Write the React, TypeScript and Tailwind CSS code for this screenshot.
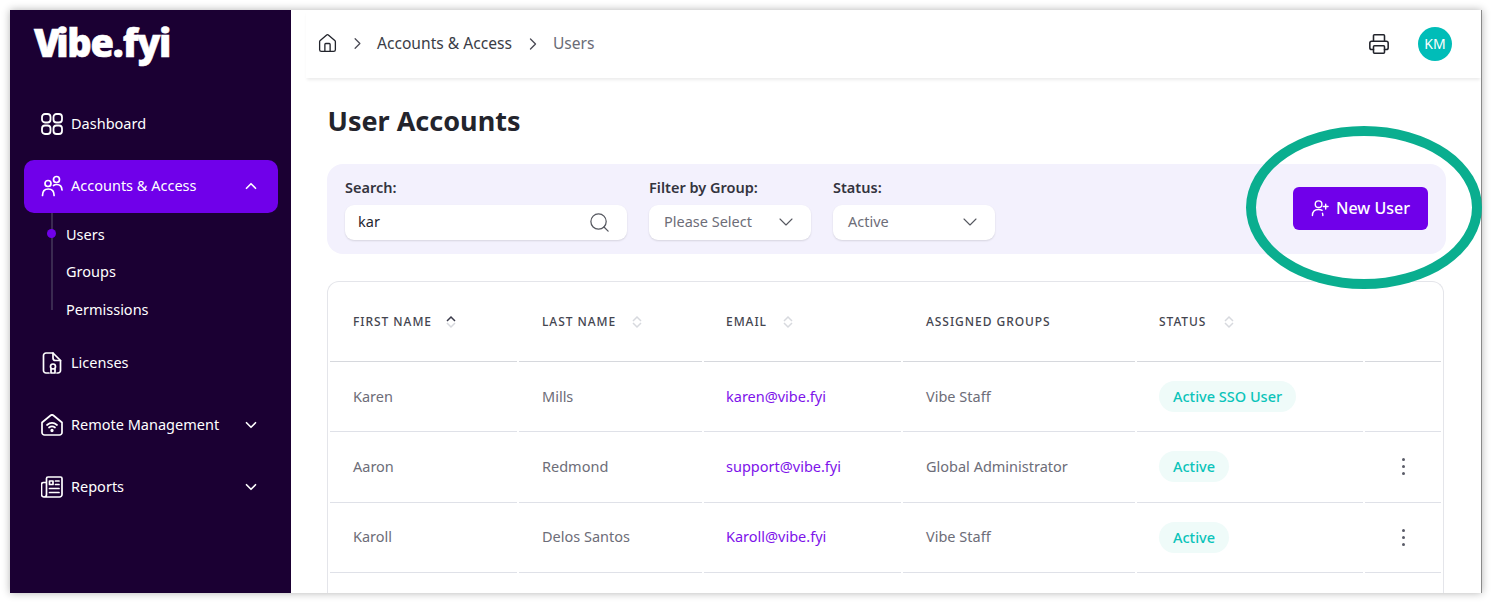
import { ChevronDown, ChevronRight, ChevronUp, House, Printer, Search } from "lucide-react";

const NavIcon = ({ name }: { name: string }) => {
  if (name === "dashboard") {
    return (
      <svg width="22" height="22" viewBox="0 0 22 22" fill="none" stroke="currentColor" strokeWidth="1.8">
        <rect x="1" y="1" width="8.500" height="8.500" rx="3" />
        <rect x="12.500" y="1" width="8.500" height="8.500" rx="3" />
        <rect x="1" y="12.500" width="8.500" height="8.500" rx="3" />
        <rect x="12.500" y="12.500" width="8.500" height="8.500" rx="3" />
      </svg>
    );
  }
  if (name === "accounts") {
    return (
      <svg width="22" height="22" viewBox="0 0 22 22" fill="none" stroke="currentColor" strokeWidth="1.7" strokeLinecap="round">
        <circle cx="7" cy="8.500" r="3" />
        <circle cx="15.500" cy="4.500" r="3" />
        <path d="M1.500 20.500c0-4.200 2.300-6.500 5.800-6.500s5.800 2.300 5.800 6.500" />
        <path d="M12.500 10.500c1-.8 2-1 3.300-1 3 0 5 2 5.200 5.500" />
      </svg>
    );
  }
  if (name === "licenses") {
    return (
      <svg width="22" height="22" viewBox="0 0 22 22" fill="none" stroke="currentColor" strokeWidth="1.7" strokeLinejoin="round" strokeLinecap="round">
        <path d="M8 21H5a2.500 2.500 0 0 1-2.500-2.500v-15A2.500 2.500 0 0 1 5 1h7l7.500 7.500v10A2.500 2.500 0 0 1 17 21h-1" />
        <path d="M12 1v5a2.500 2.500 0 0 0 2.500 2.500h5" />
        <circle cx="12" cy="14.500" r="2.500" />
        <path d="M10 17v4h4v-4" />
      </svg>
    );
  }
  if (name === "remote") {
    return (
      <svg width="22" height="22" viewBox="0 0 22 22" fill="none" stroke="currentColor" strokeWidth="1.7" strokeLinecap="round" strokeLinejoin="round">
        <path d="M1 8.500 9.500 1.500a2.300 2.300 0 0 1 3 0l8.500 7v10a2.500 2.500 0 0 1-2.500 2.500h-15A2.500 2.500 0 0 1 1 18.500Z" />
        <path d="M6 11c3-2.500 7-2.500 10 0" />
        <path d="M8 13.500c1.800-1.400 4.200-1.400 6 0" />
        <circle cx="11" cy="16.500" r=".8" fill="currentColor" />
      </svg>
    );
  }
  return (
    <svg width="22" height="22" viewBox="0 0 22 22" fill="none" stroke="currentColor" strokeWidth="1.7" strokeLinecap="round" strokeLinejoin="round">
      <path d="M5.500 21h13a2.500 2.500 0 0 0 2.500-2.500V2.500A1.500 1.500 0 0 0 19.500 1H7a1.500 1.500 0 0 0-1.500 1.500v16a2.500 2.500 0 0 1-5 0V8.500a2 2 0 0 1 2-2h3" />
      <path d="M8.500 5h3.500v3.500H8.500Z" />
      <path d="M14.500 5H18M14.500 8.500H18M8.500 12.500H18M8.500 16.500H18" />
    </svg>
  );
};

const UserPlusIcon = () => (
  <svg width="18" height="18" viewBox="0 0 19 19" fill="none" stroke="currentColor" strokeWidth="1.500" strokeLinecap="round">
    <circle cx="8" cy="5.500" r="3.500" />
    <path d="M1.500 17.500c0-4 2.500-6.500 6.500-6.500 1.500 0 2.700.3 3.700 1" />
    <path d="M12.500 17.500c0-1-.1-1.700-.4-2.400M15.500 5.500v5M13 8h5" />
  </svg>
);

const SortIcon = ({ active, className }: { active?: boolean; className: string }) => (
  <span className={`inline-flex flex-col items-center align-middle ${className}`}>
    <svg width="12" height="7" viewBox="0 0 12 7" fill="none" strokeWidth="1.500" stroke={active ? "#3a3a4a" : "#d7d9de"}>
      <path d="M2 6l4-4 4 4" />
    </svg>
    <svg width="12" height="7" viewBox="0 0 12 7" fill="none" strokeWidth="1.500" stroke="#d7d9de">
      <path d="M2 1l4 4 4-4" />
    </svg>
  </span>
);

const SideItem = ({ icon, label, arrow }: { icon: string; label: string; arrow?: boolean }) => (
  <div className="h-[53px] ml-[14px] mr-[13px] pl-[17px] pr-[18px] flex items-center text-white text-[14.500px]">
    <NavIcon name={icon} />
    <span className="ml-[8px] flex-1">{label}</span>
    {arrow && <ChevronDown size={18} strokeWidth={2.200} />}
  </div>
);

const rows = [
  { first: "Karen", last: "Mills", email: "karen@vibe.fyi", group: "Vibe Staff", status: "Active SSO User", menu: false },
  { first: "Aaron", last: "Redmond", email: "support@vibe.fyi", group: "Global Administrator", status: "Active", menu: true },
  { first: "Karoll", last: "Delos Santos", email: "Karoll@vibe.fyi", group: "Vibe Staff", status: "Active", menu: true },
];

const thClass = "h-[80px] border-b border-[#d6d8dd] p-0 text-left font-medium text-[12px] tracking-[0.950px] text-[#44454f]";
const tdClass = "h-[70.330px] border-b border-[#dfe1e8] p-0 text-[14.500px]";

export default function App() {
  return (
    <div className="relative w-[1492px] h-[603px] overflow-hidden bg-white pt-[10px] pl-[10px] pr-[10px] pb-[10px] font-['Noto_Sans',sans-serif]">
      <div className="flex h-[583px] w-[1472px] overflow-hidden border-r border-[#8a8a8a] bg-white shadow-[0_0_8px_rgba(0,0,0,0.3)]">
        <aside className="w-[281px] shrink-0 bg-[#1b0033]">
          <div className="h-[87px] pl-[24px] pt-[5px] text-[38px] leading-[54px] font-black tracking-[-1.200px] text-white [-webkit-text-stroke:0.6px_white]">
            <span className="tracking-[-4.200px]">V</span>ibe.fyi
          </div>
          <div className="flex flex-col gap-[9px]">
            <div className="mb-[1px]">
              <SideItem icon="dashboard" label="Dashboard" />
            </div>
            <div>
              <div className="h-[53px] ml-[14px] mr-[13px] pb-[1px] pl-[17px] pr-[18px] flex items-center rounded-[10px] bg-[#7000ea] text-white text-[14.500px]">
                <NavIcon name="accounts" />
                <span className="ml-[8px] flex-1">Accounts &amp; Access</span>
                <ChevronUp size={18} strokeWidth={2.200} />
              </div>
              <div className="relative h-[114px] pt-[3px] pl-[56px] text-white text-[14.500px]">
                <div className="absolute left-[41px] top-0 h-[97px] w-[2px] bg-[#3a2a50]" />
                <div className="absolute left-[37px] top-[16px] h-[9px] w-[9px] rounded-full bg-[#7000ea]" />
                <div className="h-[37.500px] flex items-center">Users</div>
                <div className="h-[37.500px] flex items-center">Groups</div>
                <div className="h-[37.500px] flex items-center">Permissions</div>
              </div>
            </div>
            <SideItem icon="licenses" label="Licenses" />
            <SideItem icon="remote" label="Remote Management" arrow />
            <SideItem icon="reports" label="Reports" arrow />
          </div>
        </aside>

        <main className="flex-1 min-w-0">
          <header className="h-[68px] ml-[15px] flex items-center pb-[1px] pl-[11px] pr-[29px] bg-white shadow-[0_3px_3px_-1px_rgba(0,0,0,0.08)] text-[15.600px]">
            <House size={21} strokeWidth={1.500} className="text-[#22242c]" />
            <ChevronRight size={19} strokeWidth={1.600} className="ml-[10px] text-[#4a4a55]" />
            <span className="ml-[10px] text-[#3a3c46]">Accounts &amp; Access</span>
            <ChevronRight size={20} strokeWidth={1.600} className="ml-[11px] text-[#4a4a55]" />
            <span className="ml-[10px] text-[#6a6c76]">Users</span>
            <Printer size={22} strokeWidth={1.700} className="ml-auto text-[#22242c]" />
            <div className="ml-[28px] flex h-[34px] w-[34px] items-center justify-center rounded-full bg-[#00bdb8] text-[14px] text-white">KM</div>
          </header>

          <div className="pl-[36px] pr-[35px]">
            <h1 className="mt-[22px] ml-[0.500px] text-[27px] leading-[42px] font-bold text-[#23242c]">User Accounts</h1>

            <section className="mt-[22px] flex h-[90px] w-[1119px] items-start rounded-[16px] bg-[#f3f1fd] pl-[18px] pr-[18px] pt-[13px]">
              <div className="w-[282px]">
                <div className="text-[14.500px] leading-[20px] font-semibold text-[#33343e]">Search:</div>
                <div className="mt-[8px] h-[35px] flex items-center rounded-[9px] bg-white pb-[1px] pl-[13px] pr-[16px] shadow-[0_1px_2px_rgba(0,0,0,0.12)] text-[14.500px] text-[#25262e]">
                  <span className="flex-1">kar</span>
                  <Search size={23} strokeWidth={1.300} className="text-[#55575f]" />
                </div>
              </div>
              <div className="ml-[22px] w-[162px]">
                <div className="text-[14.500px] leading-[20px] font-semibold text-[#33343e]">Filter by Group:</div>
                <div className="mt-[8px] h-[35px] flex items-center rounded-[9px] bg-white pb-[1px] pl-[15px] pr-[13px] shadow-[0_1px_2px_rgba(0,0,0,0.12)] text-[14.500px] text-[#6d6d78]">
                  <span className="flex-1">Please Select</span>
                  <ChevronDown size={24} strokeWidth={1.100} className="text-[#55575f]" />
                </div>
              </div>
              <div className="ml-[22px] w-[162px]">
                <div className="text-[14.500px] leading-[20px] font-semibold text-[#33343e]">Status:</div>
                <div className="mt-[8px] h-[35px] flex items-center rounded-[9px] bg-white pb-[1px] pl-[15px] pr-[13px] shadow-[0_1px_2px_rgba(0,0,0,0.12)] text-[14.500px] text-[#6d6d78]">
                  <span className="flex-1">Active</span>
                  <ChevronDown size={24} strokeWidth={1.100} className="text-[#55575f]" />
                </div>
              </div>
              <button className="ml-auto mt-[10px] flex h-[43px] w-[135px] items-center justify-center gap-[7px] rounded-[6px] bg-[#7000ea] pb-[1px] text-[16px] font-medium text-white">
                <UserPlusIcon />
                New User
              </button>
            </section>

            <section className="mt-[27px] h-[330px] w-[1117px] rounded-t-[12px] border border-[#e4e5ea] border-b-0">
              <table className="w-[1115px] table-fixed border-separate border-spacing-x-[2px] border-spacing-y-0">
                <thead>
                  <tr>
                    <th className={`${thClass} w-[187px] pl-[23px]`}>FIRST NAME<SortIcon active className="ml-[13px]" /></th>
                    <th className={`${thClass} w-[183px] pl-[23px]`}>LAST NAME<SortIcon className="ml-[15px]" /></th>
                    <th className={`${thClass} w-[197px] pl-[22px]`}>EMAIL<SortIcon className="ml-[15px]" /></th>
                    <th className={`${thClass} w-[232px] pl-[23px]`}>ASSIGNED GROUPS</th>
                    <th className={`${thClass} w-[226px] pl-[22px]`}>STATUS<SortIcon className="ml-[17px]" /></th>
                    <th className={`${thClass} w-[76px]`}></th>
                  </tr>
                </thead>
                <tbody>
                  {rows.map((row) => (
                    <tr key={row.email}>
                      <td className={`${tdClass} pl-[23px] text-[#6d6d78]`}>{row.first}</td>
                      <td className={`${tdClass} pl-[23px] text-[#6d6d78]`}>{row.last}</td>
                      <td className={`${tdClass} pl-[22px] text-[#7d12ea]`}>{row.email}</td>
                      <td className={`${tdClass} pl-[23px] text-[#6d6d78]`}>{row.group}</td>
                      <td className={`${tdClass} pl-[22px]`}>
                        <span className="inline-block h-[31px] rounded-full bg-[#effbf9] px-[14px] text-[14.500px] font-medium leading-[31px] text-[#0bc4ba]">{row.status}</span>
                      </td>
                      <td className={tdClass}>
                        {row.menu && (
                          <div className="ml-[37px] flex w-[3px] flex-col gap-[4px]">
                            <span className="h-[3px] w-[3px] rounded-full bg-[#5a5c68]" />
                            <span className="h-[3px] w-[3px] rounded-full bg-[#5a5c68]" />
                            <span className="h-[3px] w-[3px] rounded-full bg-[#5a5c68]" />
                          </div>
                        )}
                      </td>
                    </tr>
                  ))}
                </tbody>
              </table>
            </section>
          </div>
        </main>
      </div>
      <div className="absolute left-[1246px] top-[126px] h-[163px] w-[236px] rounded-[50%] border-[10px] border-[#0aae8f]" />
    </div>
  );
}
